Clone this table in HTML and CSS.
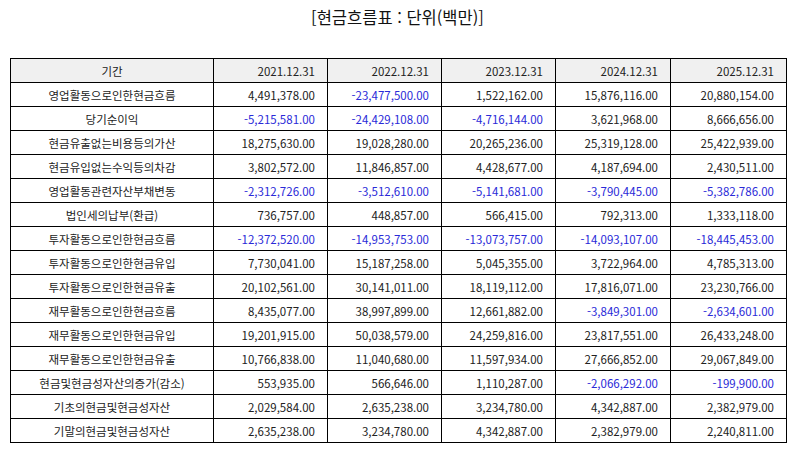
FILE: index.html
```html
<!DOCTYPE html>
<html lang="ko">
<head>
<meta charset="utf-8">
<link rel="stylesheet" href="styles.css">
</head>
<body>
<h1 class="title">[현금흐름표 : 단위(백만)]</h1>
<table class="cf">
<colgroup>
<col class="c-label"><col class="c-num"><col class="c-num"><col class="c-num"><col class="c-num5"><col class="c-num6">
</colgroup>
<thead>
<tr><th class="label">기간</th><th>2021.12.31</th><th>2022.12.31</th><th>2023.12.31</th><th>2024.12.31</th><th>2025.12.31</th></tr>
</thead>
<tbody>
<tr><td class="label">영업활동으로인한현금흐름</td><td>4,491,378.00</td><td class="neg">-23,477,500.00</td><td>1,522,162.00</td><td>15,876,116.00</td><td>20,880,154.00</td></tr>
<tr><td class="label">당기순이익</td><td class="neg">-5,215,581.00</td><td class="neg">-24,429,108.00</td><td class="neg">-4,716,144.00</td><td>3,621,968.00</td><td>8,666,656.00</td></tr>
<tr><td class="label">현금유출없는비용등의가산</td><td>18,275,630.00</td><td>19,028,280.00</td><td>20,265,236.00</td><td>25,319,128.00</td><td>25,422,939.00</td></tr>
<tr><td class="label">현금유입없는수익등의차감</td><td>3,802,572.00</td><td>11,846,857.00</td><td>4,428,677.00</td><td>4,187,694.00</td><td>2,430,511.00</td></tr>
<tr><td class="label">영업활동관련자산부채변동</td><td class="neg">-2,312,726.00</td><td class="neg">-3,512,610.00</td><td class="neg">-5,141,681.00</td><td class="neg">-3,790,445.00</td><td class="neg">-5,382,786.00</td></tr>
<tr><td class="label">법인세의납부(환급)</td><td>736,757.00</td><td>448,857.00</td><td>566,415.00</td><td>792,313.00</td><td>1,333,118.00</td></tr>
<tr><td class="label">투자활동으로인한현금흐름</td><td class="neg">-12,372,520.00</td><td class="neg">-14,953,753.00</td><td class="neg">-13,073,757.00</td><td class="neg">-14,093,107.00</td><td class="neg">-18,445,453.00</td></tr>
<tr><td class="label">투자활동으로인한현금유입</td><td>7,730,041.00</td><td>15,187,258.00</td><td>5,045,355.00</td><td>3,722,964.00</td><td>4,785,313.00</td></tr>
<tr><td class="label">투자활동으로인한현금유출</td><td>20,102,561.00</td><td>30,141,011.00</td><td>18,119,112.00</td><td>17,816,071.00</td><td>23,230,766.00</td></tr>
<tr><td class="label">재무활동으로인한현금흐름</td><td>8,435,077.00</td><td>38,997,899.00</td><td>12,661,882.00</td><td class="neg">-3,849,301.00</td><td class="neg">-2,634,601.00</td></tr>
<tr><td class="label">재무활동으로인한현금유입</td><td>19,201,915.00</td><td>50,038,579.00</td><td>24,259,816.00</td><td>23,817,551.00</td><td>26,433,248.00</td></tr>
<tr><td class="label">재무활동으로인한현금유출</td><td>10,766,838.00</td><td>11,040,680.00</td><td>11,597,934.00</td><td>27,666,852.00</td><td>29,067,849.00</td></tr>
<tr><td class="label">현금및현금성자산의증가(감소)</td><td>553,935.00</td><td>566,646.00</td><td>1,110,287.00</td><td class="neg">-2,066,292.00</td><td class="neg">-199,900.00</td></tr>
<tr><td class="label">기초의현금및현금성자산</td><td>2,029,584.00</td><td>2,635,238.00</td><td>3,234,780.00</td><td>4,342,887.00</td><td>2,382,979.00</td></tr>
<tr><td class="label">기말의현금및현금성자산</td><td>2,635,238.00</td><td>3,234,780.00</td><td>4,342,887.00</td><td>2,382,979.00</td><td>2,240,811.00</td></tr>
</tbody>
</table>
</body>
</html>
```
FILE: styles.css
```css
html, body {
  margin: 0;
  padding: 0;
  background: #ffffff;
}
body {
  font-family: "Noto Sans CJK KR", "Noto Sans", sans-serif;
  color: #222222;
}
.title {
  margin: 0;
  padding-top: 5px;
  height: 58px;
  box-sizing: border-box;
  text-align: center;
  font-size: 16.5px;
  font-weight: normal;
  line-height: 24px;
  color: #111111;
}
.cf {
  margin-left: 10px;
  width: 776px;
  border-collapse: collapse;
  table-layout: fixed;
  font-size: 11.5px;
}
.c-label { width: 203px; }
.c-num { width: 114px; }
.c-num5 { width: 115px; }
.c-num6 { width: 116px; }
.cf th, .cf td {
  border: 1px solid #000000;
  height: 23px;
  padding: 0 12px 0 4px;
  text-align: right;
  font-weight: normal;
  line-height: 14px;
  white-space: nowrap;
  color: #222222;
}
.cf th {
  background: #f0f0f0;
}
.cf .label {
  text-align: center;
  padding: 0 4px;
}
.cf .neg {
  color: #2a2ad8;
}
```
